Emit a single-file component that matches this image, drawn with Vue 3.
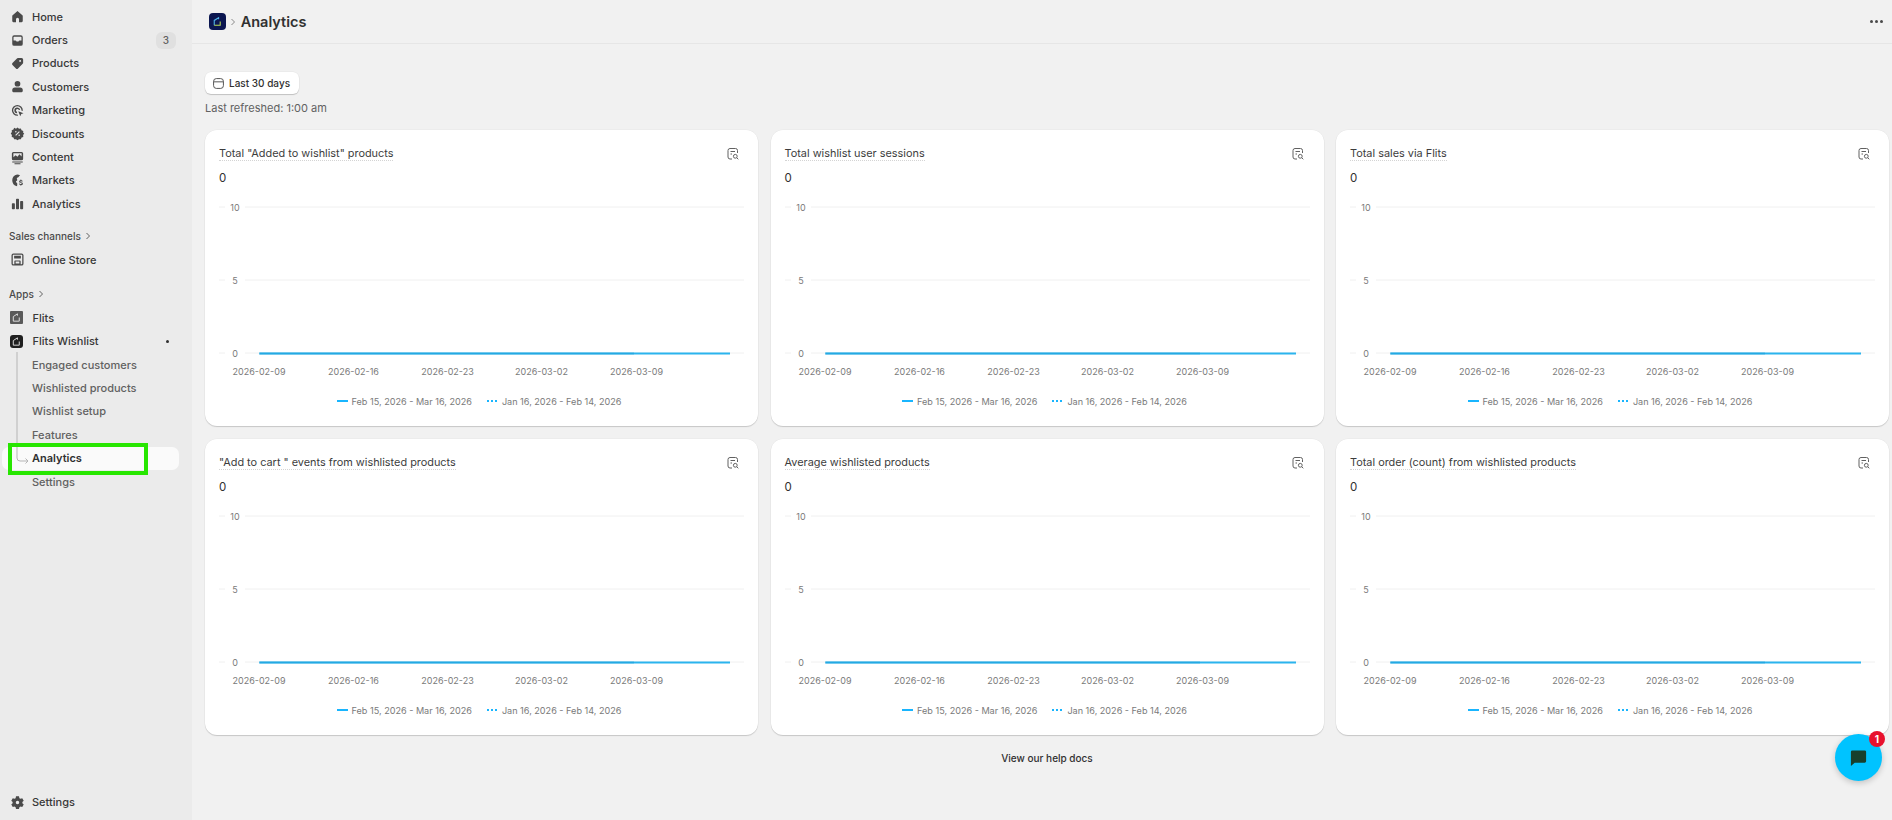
<template>
  <div class="page">
    <aside class="sidebar">
      <nav class="nav-main">
        <a v-for="item in mainNav" :key="item.label" class="nav-item">
          <svg class="nav-icon" viewBox="0 0 20 20"><path :d="item.icon" fill-rule="evenodd" /></svg>
          <span>{{ item.label }}</span>
          <span v-if="item.badge" class="count">{{ item.badge }}</span>
        </a>

        <div class="nav-heading heading-sales">
          Sales channels
          <svg class="chev" viewBox="0 0 8 8"><path d="M2.5 1 5.5 4 2.5 7" /></svg>
        </div>
        <a class="nav-item">
          <svg class="nav-icon" viewBox="0 0 20 20"><path :d="storeIcon" fill-rule="evenodd" /></svg>
          <span>Online Store</span>
        </a>

        <div class="nav-heading heading-apps">
          Apps
          <svg class="chev" viewBox="0 0 8 8"><path d="M2.5 1 5.5 4 2.5 7" /></svg>
        </div>
        <a class="nav-item">
          <span class="app-logo app-grey">
            <svg viewBox="0 0 12 12"><path d="M2.5 10V5l4.5-3v2M2.5 10h6.5V6" /></svg>
          </span>
          <span>Flits</span>
        </a>
        <a class="nav-item">
          <span class="app-logo app-dark">
            <svg viewBox="0 0 12 12"><path d="M2.5 10V5l4.5-3v2M2.5 10h6.5V6" /></svg>
          </span>
          <span>Flits Wishlist</span>
          <i class="pin-dot"></i>
        </a>

        <div class="subnav">
          <svg class="tree" viewBox="0 0 14 112">
            <path d="M1 0V106a3 3 0 0 0 3 3h8M9.5 106.500 12 109 9.500 111.500" />
          </svg>
          <a
            v-for="sub in subNav"
            :key="sub"
            class="sub-item"
            :class="{ active: sub === 'Analytics' }"
          >{{ sub }}</a>
        </div>
      </nav>

      <a class="nav-item nav-bottom">
        <svg class="nav-icon" viewBox="0 0 20 20"><path :d="gearIcon" fill-rule="evenodd" /></svg>
        <span>Settings</span>
      </a>

      <!-- annotation box drawn on top of the screenshot -->
      <div class="highlight-box"></div>
    </aside>

    <main class="main">
      <header class="topbar">
        <span class="brand">
          <svg viewBox="0 0 12 12"><path d="M3 9.500V5l4-2.500v1.500" stroke="#4fb3e8" /><path d="M3 9.500h5.500V6" stroke="#b6d957" /></svg>
        </span>
        <svg class="crumb" viewBox="0 0 8 8"><path d="M2.500 1 5.500 4 2.500 7" /></svg>
        <h1>Analytics</h1>
        <div class="more"><i></i><i></i><i></i></div>
      </header>

      <section class="content">
        <button class="range-btn">
          <svg viewBox="0 0 14 14"><rect x="1.700" y="1.700" width="10.600" height="10.600" rx="3" /><path d="M1.700 5.200h10.600" /></svg>
          Last 30 days
        </button>
        <p class="refreshed">Last refreshed: 1:00 am</p>

        <div class="grid">
          <article v-for="card in cards" :key="card" class="card">
            <div class="card-head">
              <span class="card-title">{{ card }}</span>
              <svg class="report-icon" viewBox="0 0 14 14">
                <path d="M6 12H4a2 2 0 0 1-2-2V3.500a2 2 0 0 1 2-2h5.500a2 2 0 0 1 2 2V6M4.500 4.500h4.500M4.500 7H6" />
                <circle cx="9.300" cy="9.300" r="1.900" />
                <path d="m10.700 10.700 1.600 1.600" />
              </svg>
            </div>
            <div class="card-value">0</div>
            <svg class="chart" viewBox="0 0 525 198">
              <g v-for="tick in ticks" :key="tick.label">
                <line class="gridline" x1="0" :y1="tick.y" x2="6" :y2="tick.y" />
                <line class="gridline" x1="26" :y1="tick.y" x2="525" :y2="tick.y" />
                <text class="tick-y" x="16" :y="tick.y + 3.500">{{ tick.label }}</text>
              </g>
              <line class="series" x1="40.500" y1="162.500" x2="511" y2="162.500" />
              <line class="series-prev" x1="40.500" y1="162.500" x2="415" y2="162.500" />
              <text
                v-for="date in dates"
                :key="date.label"
                class="tick-x"
                :x="date.x"
                y="184"
              >{{ date.label }}</text>
            </svg>
            <div class="legend">
              <span class="legend-item"><i class="swatch"></i>Feb 15, 2026 - Mar 16, 2026</span>
              <span class="legend-item"><i class="swatch dotted"></i>Jan 16, 2026 - Feb 14, 2026</span>
            </div>
          </article>
        </div>

        <div class="help">View our help docs</div>
      </section>
    </main>

    <div class="chat">
      <svg viewBox="0 0 20 20"><path d="M3.500 2.500h13a1.500 1.500 0 0 1 1.500 1.500v10a1.500 1.500 0 0 1-1.500 1.500H6L2 19V4a1.500 1.500 0 0 1 1.500-1.500z" /></svg>
      <span class="chat-badge">1</span>
    </div>
  </div>
</template>

<script setup>
const mainNav = [
  { label: 'Home', icon: 'M10 2.800 3.500 8.200A1.500 1.500 0 0 0 3 9.300V16a1.500 1.500 0 0 0 1.500 1.500H8v-4a2 2 0 0 1 4 0v4h3.500A1.500 1.500 0 0 0 17 16V9.300a1.500 1.500 0 0 0-.5-1.100z' },
  { label: 'Orders', badge: 3, icon: 'M5.500 3h9A2.500 2.500 0 0 1 17 5.500v9a2.500 2.500 0 0 1-2.500 2.500h-9A2.500 2.500 0 0 1 3 14.500v-9A2.500 2.500 0 0 1 5.500 3zM5.500 5a.8.800 0 0 0-.8.800V10h2.600c.5 0 .9.300 1.100.7l.2.500h2.800l.2-.5c.2-.4.600-.7 1.100-.7h2.600V5.800a.8.800 0 0 0-.8-.8z' },
  { label: 'Products', icon: 'M11 2.500h4.500A2 2 0 0 1 17.500 4.500V9a2 2 0 0 1-.6 1.400l-6.200 6.300a2 2 0 0 1-2.800 0l-4.600-4.600a2 2 0 0 1 0-2.800l6.300-6.200A2 2 0 0 1 11 2.500zM13.500 5.200a1.300 1.300 0 1 0 0 2.600 1.300 1.300 0 0 0 0-2.600z' },
  { label: 'Customers', icon: 'M10 2.500a3.800 3.800 0 1 1 0 7.600 3.800 3.800 0 0 1 0-7.600zM6.500 11.200h7a3.500 3.500 0 0 1 3.500 3.500V16a1.500 1.500 0 0 1-1.500 1.500h-11A1.500 1.500 0 0 1 3 16v-1.300a3.500 3.500 0 0 1 3.500-3.500z' },
  { label: 'Marketing', icon: 'M9.800 2.500a7.300 7.300 0 0 1 7.300 7.300c0 .5-.4.900-.9.900s-.9-.4-.9-.9a5.500 5.500 0 1 0-5.500 5.500c.5 0 .9.400.9.900s-.4.900-.9.900a7.300 7.300 0 0 1 0-14.600zM9.800 6a3.800 3.800 0 0 1 3.800 3.400h-1.800a2 2 0 1 0-2.400 2.400v1.800A3.800 3.800 0 0 1 9.800 6zM11 11l7 2.500-3 1.300-1.300 3z' },
  { label: 'Discounts', icon: 'M10 2l2 1.500 2.500-.2.900 2.300 2.300.9-.2 2.500L19 10l-1.500 2 .2 2.500-2.300.9-.9 2.300-2.500-.2L10 19l-2-1.500-2.500.2-.9-2.300-2.300-.9.2-2.500L1 10l1.500-2-.2-2.500 2.300-.9.900-2.300L8 3.500zM12 7l-5 5 1 1 5-5zM7.800 6.800a1 1 0 1 0 0 2 1 1 0 0 0 0-2zM12.200 11.200a1 1 0 1 0 0 2 1 1 0 0 0 0-2z' },
  { label: 'Content', icon: 'M4.500 2.500h11A2 2 0 0 1 17.500 4.500v7a2 2 0 0 1-2 2h-11a2 2 0 0 1-2-2v-7a2 2 0 0 1 2-2zM4.500 4.300v5.200l3-2.500 2.500 2 2.500-3.500 3 3V4.300zM3 15.200h14v1.500H3zM6 17.500h8V19H6z' },
  { label: 'Markets', icon: 'M9.500 2a8 8 0 0 1 4 1.100c-1 .6-1.300 1.300-1.800 2-.7 1-2 .8-2.500 1.700-.5 1 .7 1.600.4 2.700-.3 1-1.800 1-1.600 2.200.2 1.100 1.500 1.300 1.700 2.500.1.800-.1 2-.3 3.500A8 8 0 0 1 9.500 2zM15 8.500v1.200c1 .1 1.800.6 2 1.400l-1.300.4c-.1-.4-.5-.6-1-.6s-.9.200-.9.600c0 1 3.400.4 3.400 2.700 0 1-.8 1.700-2.200 1.800V17H14v-1c-1.200-.2-2-.8-2.200-1.700l1.300-.4c.2.500.7.800 1.300.8.700 0 1.100-.2 1.100-.7 0-1.100-3.300-.4-3.300-2.700 0-1 .8-1.600 1.800-1.700V8.500z' },
  { label: 'Analytics', icon: 'M9 3.500h2a1 1 0 0 1 1 1V16.500a1 1 0 0 1-1 1H9a1 1 0 0 1-1-1V4.500a1 1 0 0 1 1-1zM3.500 9.500h2a1 1 0 0 1 1 1v6a1 1 0 0 1-1 1h-2a1 1 0 0 1-1-1v-6a1 1 0 0 1 1-1zM14.500 6.500h2a1 1 0 0 1 1 1v9a1 1 0 0 1-1 1h-2a1 1 0 0 1-1-1v-9a1 1 0 0 1 1-1z' }
]

const storeIcon = 'M4.500 2h11A2.500 2.500 0 0 1 18 4.500v11a2.500 2.500 0 0 1-2.500 2.500h-11A2.500 2.500 0 0 1 2 15.500v-11A2.500 2.500 0 0 1 4.500 2zM4.500 3.700a.8.800 0 0 0-.8.800v11c0 .4.400.8.800.800h1.300v-4a1 1 0 0 1 1-1h6.400a1 1 0 0 1 1 1v4h1.300c.4 0 .8-.4.8-.8v-11a.8.800 0 0 0-.8-.8zM5.500 5h9v3.500h-9zM7.500 12.500v2.800h5v-2.800z'
const gearIcon = 'M8 1.800h4l.5 2.400 1.500.9 2.300-.8 2 3.400-1.800 1.600v1.800l1.800 1.600-2 3.400-2.300-.8-1.500.9-.5 2.400H8l-.5-2.400-1.500-.9-2.300.8-2-3.400 1.800-1.600V9.300L1.700 7.700l2-3.400 2.300.8 1.500-.9zM10 7.700a2.300 2.300 0 1 0 0 4.600 2.300 2.300 0 0 0 0-4.600z'

const subNav = ['Engaged customers', 'Wishlisted products', 'Wishlist setup', 'Features', 'Analytics', 'Settings']

const cards = [
  'Total "Added to wishlist" products',
  'Total wishlist user sessions',
  'Total sales via Flits',
  '"Add to cart " events from wishlisted products',
  'Average wishlisted products',
  'Total order (count) from wishlisted products'
]

const ticks = [
  { label: '10', y: 16 },
  { label: '5', y: 89 },
  { label: '0', y: 162 }
]

const dates = [
  { label: '2026-02-09', x: 40 },
  { label: '2026-02-16', x: 134.5 },
  { label: '2026-02-23', x: 228.5 },
  { label: '2026-03-02', x: 322.5 },
  { label: '2026-03-09', x: 417.5 }
]
</script>

<style scoped>
.page {
  display: flex;
  width: 1892px;
  height: 820px;
  overflow: hidden;
  position: relative;
  background: #f1f1f1;
  font-family: Inter, "Liberation Sans", sans-serif;
  color: #303030;
}
.sidebar {
  position: relative;
  flex: 0 0 192px;
  display: flex;
  flex-direction: column;
  justify-content: space-between;
  background: #ebebeb;
  padding-top: 5px;
  padding-bottom: 6px;
  box-sizing: border-box;
}
.nav-item {
  display: flex;
  align-items: center;
  height: 23.4px;
  padding-left: 9.500px;
  font-size: 11px;
  font-weight: 500;
  color: #383838;
}
.nav-icon {
  flex: 0 0 15px;
  width: 15px;
  height: 15px;
  margin-right: 7.500px;
  fill: #4a4a4a;
}
.count {
  margin-left: auto;
  margin-right: 16px;
  width: 20px;
  height: 17px;
  line-height: 17px;
  border-radius: 6px;
  background: #e0e0e0;
  color: #616161;
  font-size: 10px;
  font-weight: 500;
  text-align: center;
}
.nav-heading {
  display: flex;
  align-items: center;
  gap: 3px;
  height: 23.4px;
  padding-left: 9px;
  font-size: 10px;
  font-weight: 500;
  color: #4a4a4a;
}
.heading-sales {
  margin-top: 9px;
}
.heading-apps {
  margin-top: 11.5px;
}
.chev,
.crumb {
  width: 8px;
  height: 8px;
  fill: none;
  stroke: #616161;
  stroke-width: 1;
}
.app-logo {
  flex: 0 0 13px;
  width: 13px;
  height: 13px;
  margin: 0 9.500px 0 0.500px;
  display: flex;
  align-items: center;
  justify-content: center;
}
.app-logo svg {
  width: 11px;
  height: 11px;
  fill: none;
  stroke: #e8e8e8;
  stroke-width: 1;
}
.app-grey {
  background: #5a5a5a;
  border-radius: 1px;
}
.app-dark {
  background: #1f1f1f;
  border-radius: 3px;
}
.pin-dot {
  margin-left: auto;
  margin-right: 23px;
  width: 3px;
  height: 3px;
  border-radius: 50%;
  background: #303030;
}
.subnav {
  position: relative;
  display: flex;
  flex-direction: column;
}
.tree {
  position: absolute;
  left: 16px;
  top: -1px;
  width: 14px;
  height: 112px;
  fill: none;
  stroke: #b5b5b5;
  stroke-width: 1;
}
.sub-item {
  display: flex;
  align-items: center;
  height: 23.4px;
  padding-left: 32px;
  font-size: 11px;
  font-weight: 500;
  color: #616161;
}
.sub-item.active {
  margin: 0 13px 0 2px;
  padding-left: 30px;
  border-radius: 7px;
  background: #fafafa;
  color: #303030;
  font-weight: 600;
}
.highlight-box {
  position: absolute;
  left: 8px;
  top: 443px;
  width: 140px;
  height: 32px;
  box-sizing: border-box;
  border: 4px solid #27e600;
  pointer-events: none;
}
.main {
  flex: 1;
  min-width: 0;
  display: flex;
  flex-direction: column;
}
.topbar {
  display: flex;
  align-items: center;
  height: 44px;
  flex: 0 0 44px;
  box-sizing: border-box;
  border-bottom: 1px solid #e6e6e6;
  padding: 0 9px 0 17px;
}
.brand {
  width: 17px;
  height: 17px;
  border-radius: 4px;
  background: #0b1650;
  display: flex;
  align-items: center;
  justify-content: center;
}
.brand svg {
  width: 13px;
  height: 13px;
  fill: none;
  stroke-width: 1;
}
.crumb {
  margin: 0 3.700px 0 3px;
  stroke: #8a8a8a;
}
h1 {
  margin: 0;
  font-size: 14.500px;
  font-weight: 600;
  color: #303030;
}
.more {
  margin-left: auto;
  display: flex;
  gap: 2px;
}
.more i {
  width: 3px;
  height: 3px;
  border-radius: 50%;
  background: #4a4a4a;
}
.content {
  display: flex;
  flex-direction: column;
  align-items: flex-start;
  padding: 28px 3px 0 13px;
}
.range-btn {
  display: flex;
  align-items: center;
  gap: 4px;
  height: 22px;
  width: 94px;
  padding: 0 0 0 7px;
  border: 0;
  border-radius: 6px;
  background: #fff;
  box-shadow: 0 1px 1px rgba(0, 0, 0, 0.18), 0 0 0 0.5px rgba(0, 0, 0, 0.05);
  font: 500 10px Inter, "Liberation Sans", sans-serif;
  color: #303030;
}
.range-btn svg {
  width: 13px;
  height: 13px;
  fill: none;
  stroke: #4a4a4a;
  stroke-width: 1;
}
.refreshed {
  margin: 6.500px 0 0;
  font-size: 11px;
  line-height: 15px;
  color: #616161;
}
.grid {
  display: grid;
  grid-template-columns: repeat(3, 553px);
  column-gap: 12.500px;
  row-gap: 13px;
  margin-top: 14.500px;
}
.card {
  height: 296px;
  box-sizing: border-box;
  padding: 16px 14px 0;
  background: #fff;
  border-radius: 12px;
  box-shadow: 0 1px 1px rgba(0, 0, 0, 0.16), 0 0 0 0.5px rgba(0, 0, 0, 0.04);
}
.card-head {
  display: flex;
  align-items: center;
  justify-content: space-between;
  height: 15px;
}
.card-title {
  font-size: 10.900px;
  line-height: 14px;
  color: #3d3d3d;
  border-bottom: 1px dotted #d4d4d4;
}
.report-icon {
  width: 14px;
  height: 14px;
  margin-right: 4.500px;
  fill: none;
  stroke: #616161;
  stroke-width: 1;
}
.card-value {
  margin-top: 9px;
  font-size: 11.500px;
  line-height: 16px;
  color: #303030;
}
.chart {
  display: block;
  width: 525px;
  height: 198px;
  margin-top: 4.600px;
}
.gridline {
  stroke: #f0f0f0;
  stroke-width: 1;
}
.tick-y,
.tick-x {
  font-size: 9px;
  fill: #7a7a7a;
  text-anchor: middle;
  font-family: Inter, "Liberation Sans", sans-serif;
}
.series {
  stroke: #2bb4ee;
  stroke-width: 2;
}
.series-prev {
  stroke: #1d9ed8;
  stroke-width: 2;
  stroke-dasharray: 1 1;
}
.legend {
  display: flex;
  justify-content: center;
  gap: 15px;
  margin-top: 7px;
  padding-right: 5px;
}
.legend-item {
  display: flex;
  align-items: center;
  gap: 4px;
  font-size: 9.100px;
  color: #7a7a7a;
}
.swatch {
  width: 11px;
  height: 2px;
  background: #19b5fe;
}
.swatch.dotted {
  background: repeating-linear-gradient(90deg, #19b5fe 0 2px, transparent 2px 4px);
}
.help {
  align-self: center;
  margin-top: 17px;
  font-size: 10px;
  font-weight: 500;
  color: #303030;
}
.chat {
  position: absolute;
  left: 1835px;
  top: 734px;
  width: 47px;
  height: 47px;
  border-radius: 50%;
  background: #00c3ff;
  box-shadow: 0 2px 6px rgba(0, 0, 0, 0.2);
  display: flex;
  align-items: center;
  justify-content: center;
}
.chat svg {
  width: 19px;
  height: 19px;
  fill: #173f2c;
}
.chat-badge {
  position: absolute;
  right: -3px;
  top: -3px;
  width: 16px;
  height: 16px;
  border-radius: 50%;
  background: #e8112d;
  color: #fff;
  font-size: 10px;
  font-weight: 700;
  line-height: 16px;
  text-align: center;
}
</style>
